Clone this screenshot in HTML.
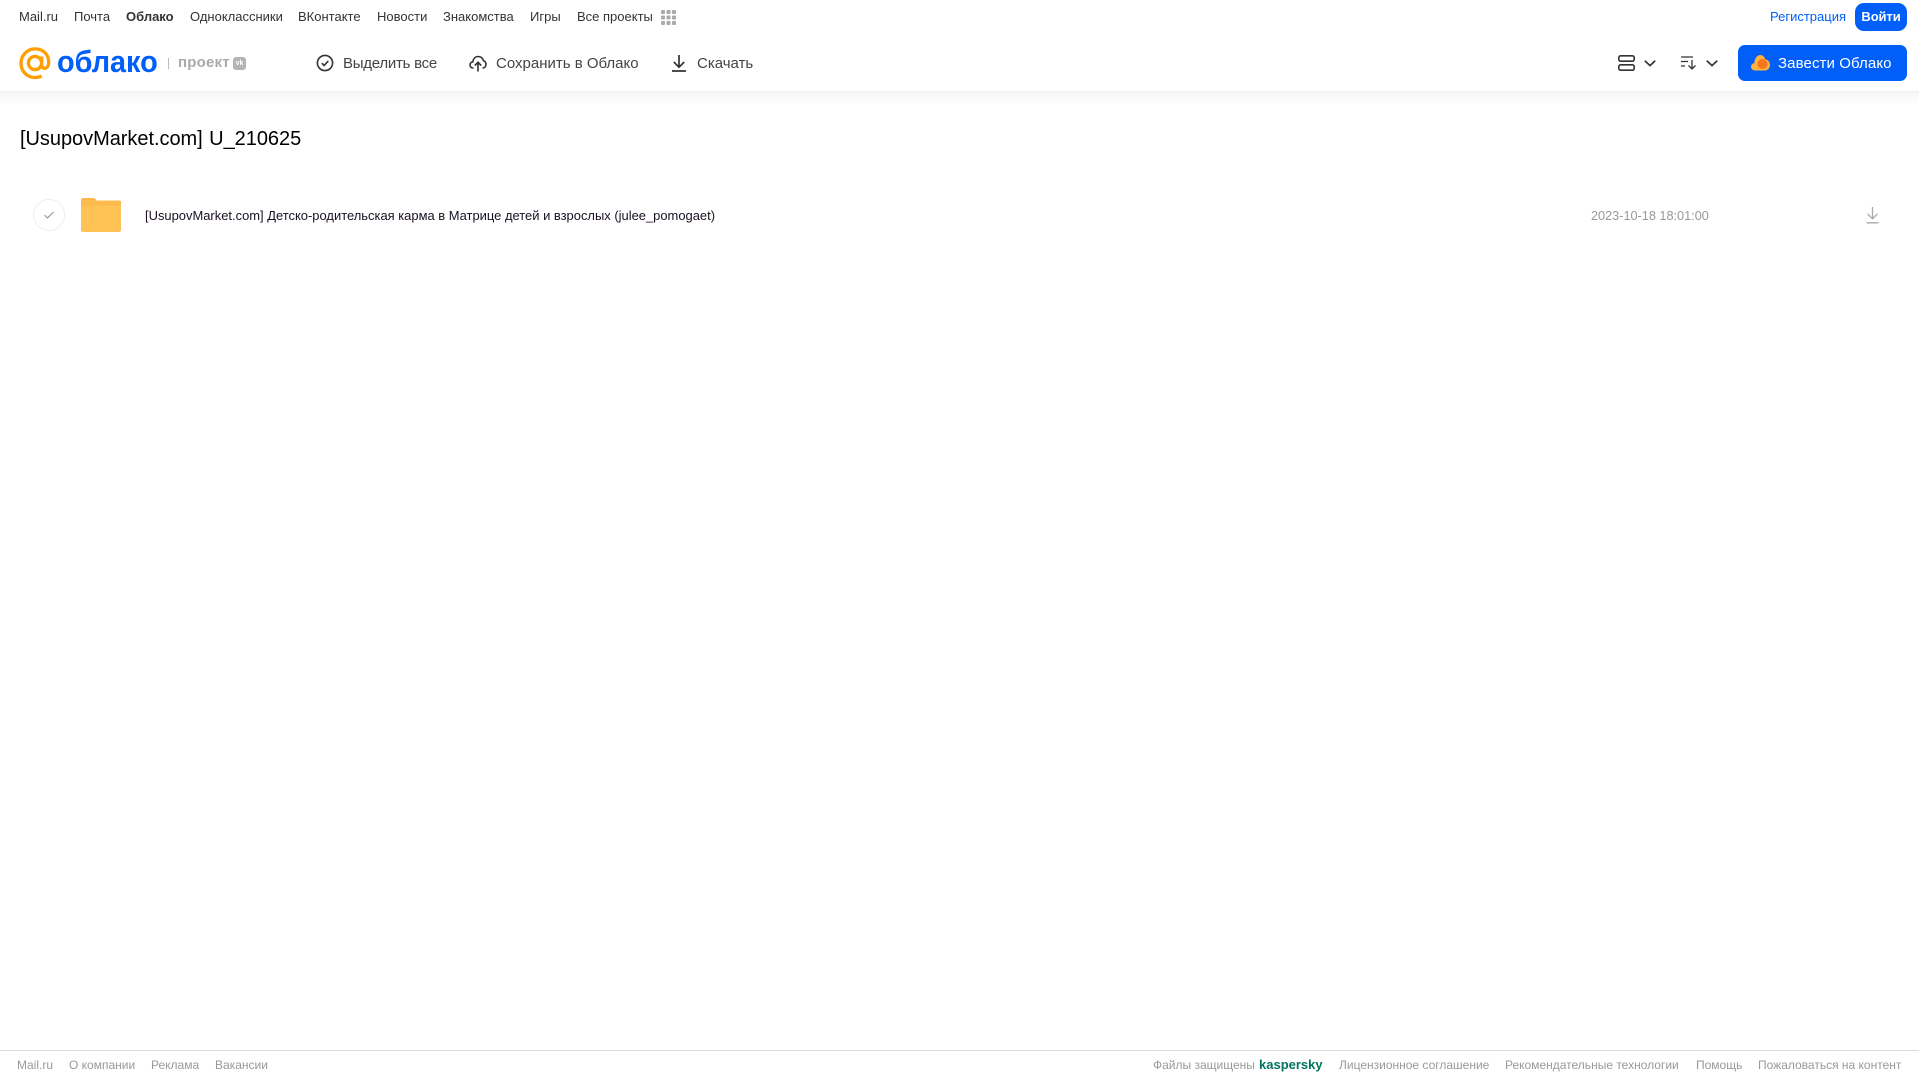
<!DOCTYPE html>
<html lang="ru"><head><meta charset="utf-8"><title>Облако</title>
<style>
html,body{margin:0;padding:0;background:#fff;width:1919px;height:1079px;overflow:hidden}
body{font-family:"Liberation Sans",sans-serif;position:relative}
.t{position:absolute;white-space:nowrap;line-height:18px}
.n{top:8px;font-size:13px;color:#333}
.b{top:54px;font-size:15px;color:#444}
.f{top:1056px;font-size:12px;color:#999}
svg{position:absolute;overflow:visible}
</style></head><body>
<div style="position:absolute;left:0;top:91px;width:1919px;height:14px;background:linear-gradient(#f5f5f5,#fff)"></div>
<div style="position:absolute;left:0;top:91px;width:1919px;height:1px;background:#f0f0f0"></div>

<span class="t n" style="left:19px">Mail.ru</span>
<span class="t n" style="left:74px">Почта</span>
<span class="t n" style="left:126px;font-weight:bold">Облако</span>
<span class="t n" style="left:190px">Одноклассники</span>
<span class="t n" style="left:298px">ВКонтакте</span>
<span class="t n" style="left:377px">Новости</span>
<span class="t n" style="left:443px">Знакомства</span>
<span class="t n" style="left:530px">Игры</span>
<span class="t n" style="left:577px">Все проекты</span>
<svg style="left:661px;top:10px" width="15" height="15" fill="#aaa"><rect width="4" height="4" rx="1"/><rect x="5.500" width="4" height="4" rx="1"/><rect x="11" width="4" height="4" rx="1"/><rect y="5.500" width="4" height="4" rx="1"/><rect x="5.500" y="5.500" width="4" height="4" rx="1"/><rect x="11" y="5.500" width="4" height="4" rx="1"/><rect y="11" width="4" height="4" rx="1"/><rect x="5.500" y="11" width="4" height="4" rx="1"/><rect x="11" y="11" width="4" height="4" rx="1"/></svg>
<span class="t" style="left:1770px;top:8px;font-size:13px;color:#005ff9">Регистрация</span>
<div style="position:absolute;left:1855px;top:3px;width:52px;height:28px;background:#005ff9;border-radius:9px;color:#fff;font-size:13px;font-weight:bold;line-height:27px;text-align:center;letter-spacing:-.1px">Войти</div>

<svg style="left:19px;top:47px" width="33" height="33" viewBox="0 0 33 33" fill="none" stroke="#ff9e00" stroke-width="3.300"><circle cx="16" cy="16" r="6.600"/><path d="M22.600 9.500v8.300c0 5 6.400 5 7-1.300C30.400 8 24.500 1.900 16 1.900 8.500 1.900 2 8.200 2 16.200 2 24.700 8.500 30.500 16 30.500c2.600 0 4.600-.5 6.600-1.500"/></svg>
<span class="t" style="left:57px;top:44px;font-size:31px;line-height:36px;font-weight:bold;color:#005ff9;transform:scaleX(.93);transform-origin:0 0">облако</span>
<div style="position:absolute;left:168px;top:58px;width:1px;height:11px;background:#bbb"></div>
<span class="t" style="left:178px;top:54px;font-size:15px;font-weight:bold;color:#aaa;letter-spacing:.2px">проект</span>
<div style="position:absolute;left:233px;top:57px;width:13px;height:13px;background:#b4b4b4;border-radius:3px;color:#fff;font-size:7px;font-weight:bold;line-height:13px;text-align:center">vk</div>

<svg style="left:316px;top:54px" width="18" height="18" viewBox="0 0 18 18" fill="none" stroke="#333" stroke-width="1.600"><circle cx="9" cy="9" r="7.600"/><path d="M5.800 9.200l2.300 2.300 4.200-4.600"/></svg>
<span class="t b" style="left:343px;letter-spacing:-.25px;top:55px">Выделить все</span>
<svg style="left:469px;top:55px" width="18" height="17" viewBox="0 0 18 17" fill="none" stroke="#333" stroke-width="1.600"><path d="M4.500 13H4C2 13 1 11.500 1 10c0-1.700 1.200-3 2.900-3.200C4.300 3.500 6.500 1.500 9.300 1.500c2.600 0 4.700 1.800 5.200 4.300C16 6.300 17 7.800 17 9.500c0 1.900-1.300 3.500-3.500 3.500"/><path d="M9 16.500V7.500M5.800 10.500L9 7.300l3.200 3.200"/></svg>
<span class="t b" style="left:496px;top:55px">Сохранить в Облако</span>
<svg style="left:672px;top:55px" width="14" height="17" viewBox="0 0 14 17" fill="none" stroke="#333" stroke-width="1.700"><path d="M7 0v12M1.800 7L7 12.200 12.200 7M0 16h14"/></svg>
<span class="t b" style="left:697px;top:55px">Скачать</span>

<svg style="left:1618px;top:55px" width="17" height="16" viewBox="0 0 17 16" fill="none" stroke="#333" stroke-width="1.600"><rect x=".8" y=".8" width="15.400" height="5.400" rx="1.800"/><rect x=".8" y="9.800" width="15.400" height="5.400" rx="1.800"/></svg>
<svg style="left:1644px;top:60px" width="12" height="7" fill="none" stroke="#333" stroke-width="1.700"><path d="M.8.8L6 5.600 11.200.8"/></svg>
<svg style="left:1681px;top:56px" width="16" height="14" viewBox="0 0 16 14" fill="none" stroke="#333" stroke-width="1.300"><path d="M0 1h12M0 5.500h7M0 10h4M11 4v9M7.500 9.500L11 13l3.500-3.500"/></svg>
<svg style="left:1706px;top:60px" width="12" height="7" fill="none" stroke="#333" stroke-width="1.700"><path d="M.8.8L6 5.600 11.200.8"/></svg>

<div style="position:absolute;left:1738px;top:45px;width:169px;height:36px;background:#005ff9;border-radius:7px"></div>
<svg style="left:1751px;top:55px" width="19" height="16" viewBox="0 0 19 16"><path d="M4 15.500C1.800 15.500 0 14 0 11.800c0-2 1.500-3.500 3.300-3.700C3.600 4.200 5.600 0 9 0c2.800 0 4.600 2 5.200 4.300C17 4.800 19 7 19 10c0 3-2.300 5.500-5.200 5.500z" fill="#ffb13d"/><circle cx="11.500" cy="9" r="5" fill="#f5761f"/></svg>
<span class="t b" style="left:1778px;top:55px;color:#fff;letter-spacing:.1px">Завести Облако</span>

<span class="t" style="left:20px;top:126px;font-size:20px;line-height:26px;color:#000;word-spacing:1px;letter-spacing:-.04px">[UsupovMarket.com] U_210625</span>

<div style="position:absolute;left:33px;top:199px;width:30px;height:30px;border:1px solid #eee;border-radius:50%"></div>
<svg style="left:44px;top:211px" width="10" height="8" fill="none" stroke="#999" stroke-width="1.200"><path d="M.5 4l3 3L9.500 1"/></svg>
<svg style="left:81px;top:198px" width="40" height="34" viewBox="0 0 40 34"><path d="M2 0h10c2 0 3 1 4 3h-16V2c0-1 1-2 2-2z" fill="#fdb84a"/><path d="M0 2.500h38c1.100 0 2 .9 2 2V32c0 1.100-.9 2-2 2H2c-1.100 0-2-.9-2-2z" fill="#ffc254"/><rect x="0" y="3" width="40" height="5" fill="#fdbb4e"/></svg>
<span class="t" style="left:145px;top:207px;font-size:12.950px;color:#1a1020">[UsupovMarket.com] Детско-родительская карма в Матрице детей и взрослых (julee_pomogaet)</span>
<span class="t" style="left:1591px;top:207px;font-size:12.700px;color:#999">2023-10-18 18:01:00</span>
<svg style="left:1866px;top:207px" width="13" height="17" viewBox="0 0 13 17" fill="none" stroke="#aaa" stroke-width="1.300"><path d="M6.500 0v11.500M1.500 6.800l5 5 5-5M.5 15.800h12"/></svg>

<div style="position:absolute;left:0;top:1050px;width:1919px;height:1px;background:#dcdcdc"></div>
<span class="t f" style="left:17px">Mail.ru</span>
<span class="t f" style="left:69px">О компании</span>
<span class="t f" style="left:151px">Реклама</span>
<span class="t f" style="left:215px">Вакансии</span>
<span class="t f" style="left:1153px">Файлы защищены</span>
<span class="t f" style="left:1259px;font-size:13px;font-weight:bold;color:#00745f">kaspersky</span>
<span class="t f" style="left:1339px">Лицензионное соглашение</span>
<span class="t f" style="left:1505px">Рекомендательные технологии</span>
<span class="t f" style="left:1696px">Помощь</span>
<span class="t f" style="left:1758px">Пожаловаться на контент</span>
</body></html>
